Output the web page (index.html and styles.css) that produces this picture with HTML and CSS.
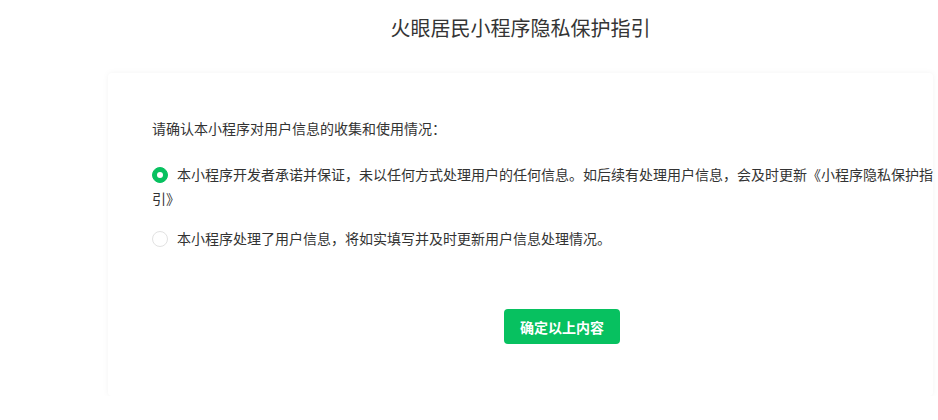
FILE: index.html
```html
<!DOCTYPE html>
<html lang="zh-CN">
<head>
  <meta charset="utf-8">
  <meta name="viewport" content="width=device-width, initial-scale=1">
  <title>火眼居民小程序隐私保护指引</title>
  <link rel="stylesheet" href="styles.css">
</head>
<body>

<div class="page">
  <h1 class="title">火眼居民小程序隐私保护指引</h1>

  <div class="card">
    <div class="inner">
      <p class="intro">请确认本小程序对用户信息的收集和使用情况：</p>

      <label class="option">
        <span class="radio checked"></span>本小程序开发者承诺并保证，未以任何方式处理用户的任何信息。如后续有处理用户信息，会及时更新《小程序隐私保护指引》
      </label>

      <label class="option">
        <span class="radio"></span>本小程序处理了用户信息，将如实填写并及时更新用户信息处理情况。
      </label>

      <div class="actions">
        <button class="btn">确定以上内容</button>
      </div>
    </div>
  </div>
</div>

</body>
</html>
```

FILE: styles.css
```css
html, body {margin: 0; padding: 0; background: #fff; overflow-x: hidden;}
body {font-family: "Noto Sans CJK SC", "Microsoft YaHei", sans-serif; color: #333; font-size: 14px;}
.page {margin-left: 108px; width: 825px;}
.title {margin: 14px 0 0; font-size: 20px; line-height: 28px; font-weight: normal; text-align: center; color: #353535;}
.card {margin-top: 31px; padding: 43px 0 52px 44px; background: #fff; border-radius: 4px; box-shadow: 0 0 6px rgba(0,0,0,.05);}
.inner {width: 820px;}
.intro {margin: 0 0 22px; line-height: 24px;}
.option {display: block; line-height: 24px; margin-bottom: 16px; padding-right: 34px; cursor: pointer;}
.radio {display: inline-block; width: 16px; height: 16px; box-sizing: border-box; border: 1px solid #e2e2e2; border-radius: 50%; margin-right: 9px; vertical-align: -3px; position: relative;}
.radio.checked {background: #07c160; border-color: #07c160;}
.radio.checked::after {content: ""; position: absolute; left: 4px; top: 4px; width: 6px; height: 6px; border-radius: 50%; background: #fff;}
.actions {margin-top: 59px; text-align: center;}
.btn {width: 116px; height: 35px; border: 0; border-radius: 4px; background: #07c160; color: #fff; font-family: inherit; font-size: 14px; font-weight: bold; cursor: pointer;}
```
